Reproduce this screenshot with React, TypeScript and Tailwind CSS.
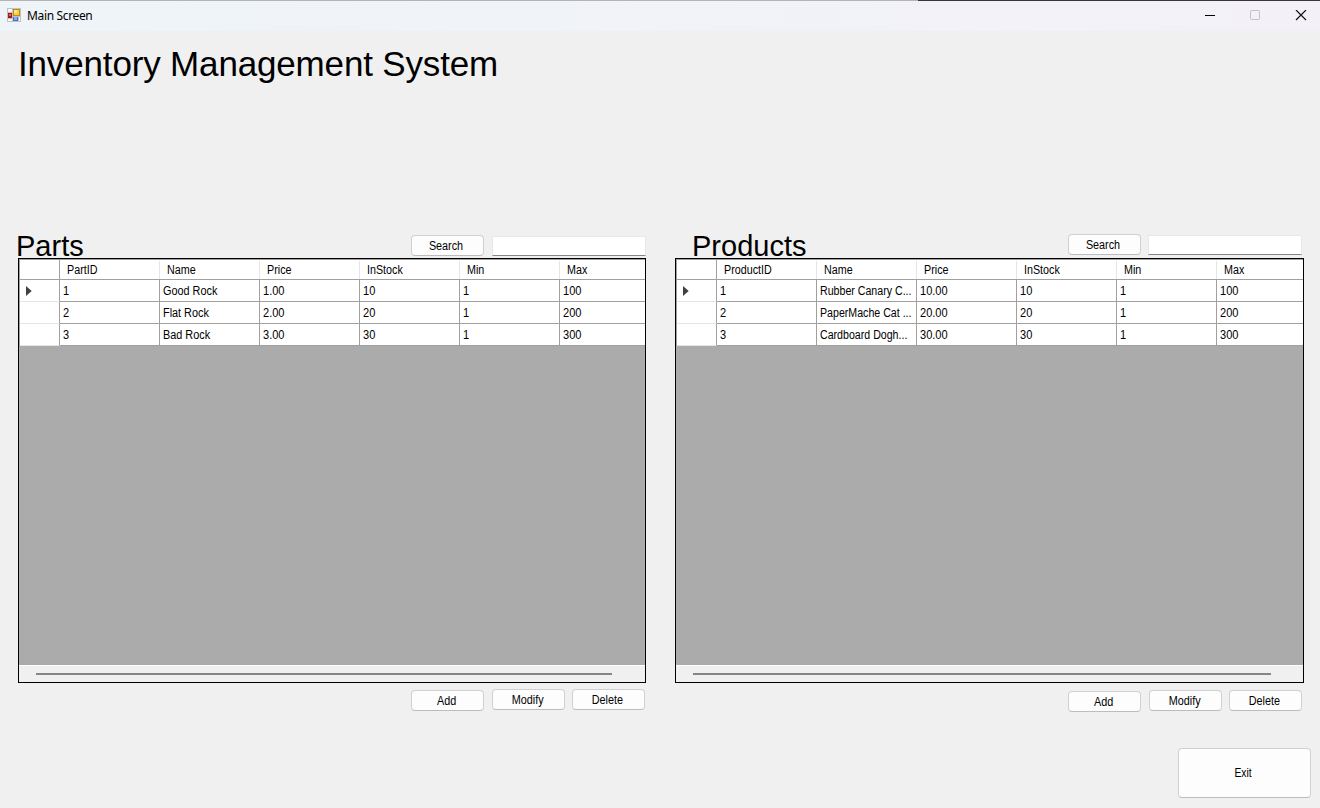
import React from "react";

type Row = string[];

const parts: Row[] = [
  ["1", "Good Rock", "1.00", "10", "1", "100"],
  ["2", "Flat Rock", "2.00", "20", "1", "200"],
  ["3", "Bad Rock", "3.00", "30", "1", "300"],
];

const products: Row[] = [
  ["1", "Rubber Canary C...", "10.00", "10", "1", "100"],
  ["2", "PaperMache Cat ...", "20.00", "20", "1", "200"],
  ["3", "Cardboard Dogh...", "30.00", "30", "1", "300"],
];

function Button({ label, className = "" }: { label: string; className?: string }) {
  return (
    <button
      className={`flex h-[21px] w-[73px] shrink-0 items-center justify-center rounded-[4px] border border-[#d0d0d0] border-b-[#bcbcbc] bg-[#fdfdfd] pr-[2px] text-[12px] leading-[14px] ${className}`}
    >
      <span className="inline-block scale-x-[0.9]">{label}</span>
    </button>
  );
}

function CellText({ value }: { value: string }) {
  const numeric = /^[\d.]+$/.test(value);
  const scale = numeric ? "scale-x-[0.92]" : value.endsWith("...") ? "scale-x-[0.885]" : "scale-x-[0.905]";
  return <span className={`inline-block origin-left ${scale}`}>{value}</span>;
}

function Grid({
  columns,
  rows,
  width,
  barEnd,
}: {
  columns: string[];
  rows: Row[];
  width: string;
  barEnd: string;
}) {
  return (
    <div className={`flex h-[425px] flex-col overflow-hidden border border-black bg-[#ababab] text-[12px] leading-[14px] ${width}`}>
      <div className="flex h-[21px] shrink-0 border-y border-l border-[#a0a0a0] bg-white">
        <div className="w-10 shrink-0 border-r border-[#a0a0a0]" />
        {columns.map((c, i) => (
          <div key={c} className="flex w-[100px] shrink-0 pt-px">
            <div className="grow pt-[2px] pl-[7px]">
              <span className="inline-block origin-left scale-x-[0.895]">{c}</span>
            </div>
            {i < columns.length - 1 && <div className="w-px bg-[#e5e5e5]" />}
          </div>
        ))}
      </div>
      {rows.map((r) => (
        <div key={r[0]} className="flex h-[22px] shrink-0 border-l border-[#a0a0a0] bg-white">
          <div className="flex w-10 shrink-0 items-center border-r border-b border-r-[#a0a0a0] border-b-[#e5e5e5] pl-[6px]">
            {r[0] === "1" && (
              <svg width="6" height="10" viewBox="0 0 6 10" className="mt-px">
                <path d="M0 0 L5.7 5 L0 10 Z" fill="#404040" />
              </svg>
            )}
          </div>
          {r.map((v, i) => (
            <div
              key={i}
              className="w-[100px] shrink-0 border-r border-b border-[#a0a0a0] pt-1 pl-[3px] whitespace-nowrap"
            >
              <CellText value={v} />
            </div>
          ))}
        </div>
      ))}
      <div className={`mt-auto h-[17px] shrink-0 border-t border-white bg-[#f0f0f0] pt-[7px] pl-[17px] ${barEnd}`}>
        <div className="h-[2px] bg-[#868686]" />
      </div>
    </div>
  );
}

function SearchBox() {
  return (
    <input className="block h-[20px] w-[154px] border border-[#e8e8e8] border-b-[#868686] bg-white outline-none" />
  );
}

export default function App() {
  return (
    <div className="flex h-[808px] w-[1320px] flex-col overflow-hidden bg-[#f0f0f0] font-['Liberation_Sans',Arial,sans-serif] text-black">
      <div className="flex h-px shrink-0">
        <div className="w-[918px] bg-[#b4b4b4]" />
        <div className="grow bg-[#3b363b]" />
      </div>
      <header className="flex h-[30px] shrink-0 items-center bg-gradient-to-r from-[#eef4f8] to-[#f3f1f7] pl-[7px]">
        <svg width="14" height="14" viewBox="0 0 14 14" shapeRendering="crispEdges" className="-mt-[2px]">
          <rect width="14" height="14" fill="#bfc1c2" />
          <rect x="1" y="1" width="4" height="3" fill="#f5f7f8" />
          <rect x="1" y="11" width="4" height="2" fill="#f5f7f8" />
          <rect x="12" y="9" width="1" height="4" fill="#f5f7f8" />
          <rect x="1" y="5" width="4" height="5" fill="#a31a15" />
          <rect x="2" y="6" width="2" height="2" fill="#e0685f" />
          <rect x="6" y="1" width="7" height="7" fill="#c08a18" />
          <rect x="7" y="2" width="5" height="5" fill="#fbd03c" />
          <rect x="7" y="2" width="3" height="3" fill="#ffe680" />
          <rect x="6" y="9" width="5" height="4" fill="#3f73d0" />
          <rect x="7" y="9" width="3" height="3" fill="#7fb0f5" />
        </svg>
        <span className="ml-[6px] font-['Noto_Sans','Open_Sans',sans-serif] text-[12px] leading-4 tracking-[-0.35px]">Main Screen</span>
        <div className="mr-[13px] ml-auto flex items-center">
          <svg width="102" height="12" viewBox="0 0 102 12" fill="none">
            <path d="M0 5.5H10" stroke="#000" />
            <rect x="45.5" y="0.5" width="9" height="9" rx="1" stroke="#c2c0c7" />
            <path d="M91 0L101 10M101 0L91 10" stroke="#111" strokeWidth="1.2" />
          </svg>
        </div>
      </header>
      <h1 className="mt-[13px] ml-[18px] h-[44px] shrink-0 text-[35px] leading-[40px] tracking-[-0.16px] whitespace-nowrap">
        Inventory Management System
      </h1>
      <main className="mt-[141px] flex pl-[18px]">
        <section className="w-[628px]">
          <div className="flex h-[29px] items-start">
            <h2 className="-ml-[2px] w-[395px] text-[29px] leading-[34px]">Parts</h2>
            <Button label="Search" className="mt-[6px]" />
            <div className="mt-[7px] ml-[7.5px]">
              <SearchBox />
            </div>
          </div>
          <Grid
            columns={["PartID", "Name", "Price", "InStock", "Min", "Max"]}
            rows={parts}
            width="w-[628px]"
            barEnd="pr-[33px]"
          />
          <div className="flex pt-[6px] pl-[393px]">
            <Button label="Add" className="mt-px" />
            <Button label="Modify" className="ml-2" />
            <Button label="Delete" className="ml-[7px]" />
          </div>
        </section>
        <section className="ml-[29px] w-[629px]">
          <div className="flex h-[29px] items-start">
            <h2 className="w-[393px] pl-[17px] text-[29px] leading-[34px]">Products</h2>
            <Button label="Search" className="mt-[5px]" />
            <div className="mt-[6px] ml-[7px]">
              <SearchBox />
            </div>
          </div>
          <Grid
            columns={["ProductID", "Name", "Price", "InStock", "Min", "Max"]}
            rows={products}
            width="w-[629px]"
            barEnd="pr-[32px]"
          />
          <div className="flex pt-[7px] pl-[393px]">
            <Button label="Add" className="mt-px" />
            <Button label="Modify" className="ml-2" />
            <Button label="Delete" className="ml-[7px]" />
          </div>
        </section>
      </main>
      <footer className="mt-auto mr-[9px] mb-[10px] flex justify-end">
        <button className="flex h-[50px] w-[133px] items-center justify-center rounded-[4px] border border-[#d0d0d0] border-b-[#bcbcbc] bg-[#fdfdfd] pr-[2px] text-[12px]">
          <span className="inline-block scale-x-[0.86]">Exit</span>
        </button>
      </footer>
    </div>
  );
}
